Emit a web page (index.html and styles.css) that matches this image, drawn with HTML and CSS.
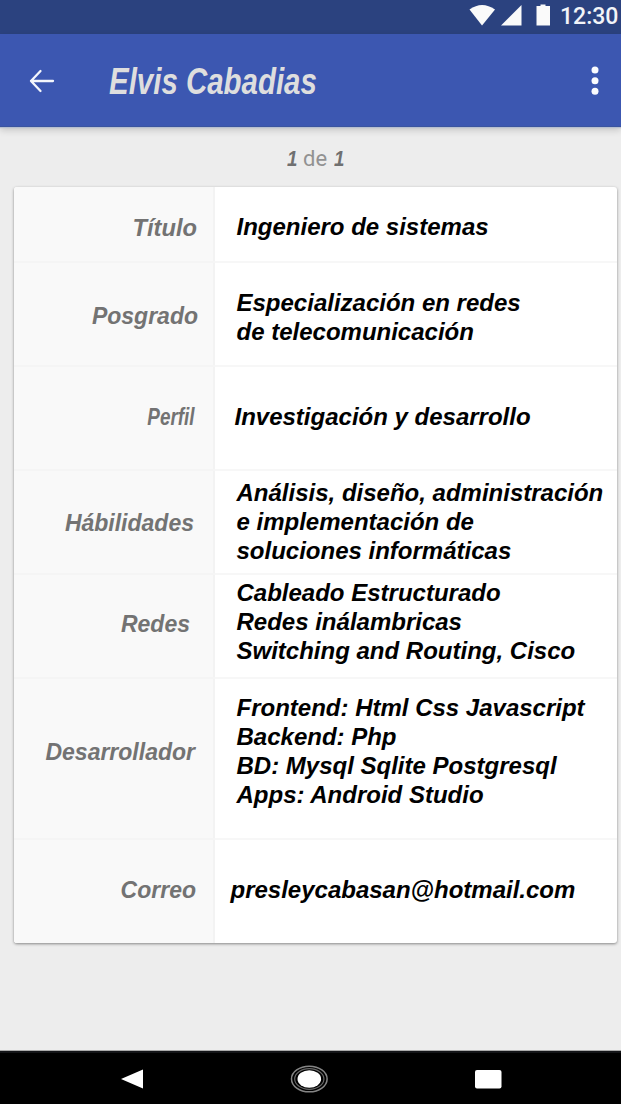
FILE: index.html
```html
<!DOCTYPE html>
<html lang="es">
<head>
<meta charset="utf-8">
<title>Elvis Cabadias</title>
<link rel="stylesheet" href="styles.css">
</head>
<body>
<div class="screen">
  <div class="status">
    <svg class="status-icons" width="84" height="34" viewBox="0 0 84 34" fill="#fafafa">
      <path d="M0.500 9.500Q13 0.500 26 9.500L13 25.500Z"/>
      <path d="M32 25.500H52.500V5Z"/>
      <path d="M67.500 6h4V4.500h5V6h4.500v19.500H67.500Z"/>
    </svg>
    <span class="clock">12:30</span>
  </div>
  <header class="appbar">
    <svg class="back" width="28" height="24" viewBox="0 0 28 24" fill="none" stroke="#f4f6fc" stroke-width="2.300" stroke-linecap="round" stroke-linejoin="round"><path d="M25 12H3M12.500 2L3 12L12.500 22"/></svg>
    <h1 class="title">Elvis Cabadias</h1>
    <svg class="more" width="8" height="30" viewBox="0 0 8 30" fill="#fafbfe"><circle cx="4" cy="4" r="3.500"/><circle cx="4" cy="14.700" r="3.500"/><circle cx="4" cy="25.300" r="3.500"/></svg>
  </header>
  <main class="content">
    <div class="counter"><b class="num">1</b><span class="of">de</span><b class="num">1</b></div>
    <section class="card">
      <div class="row titulo"><div class="label"><span>Título</span></div><div class="value"><span>Ingeniero de sistemas</span></div></div>
      <div class="row posgrado"><div class="label"><span>Posgrado</span></div><div class="value"><span>Especialización en redes</span><span>de telecomunicación</span></div></div>
      <div class="row perfil"><div class="label"><span>Perfil</span></div><div class="value"><span>Investigación y desarrollo</span></div></div>
      <div class="row habilidades"><div class="label"><span>Hábilidades</span></div><div class="value"><span>Análisis, diseño, administración</span><span>e implementación de</span><span>soluciones informáticas</span></div></div>
      <div class="row redes"><div class="label"><span>Redes</span></div><div class="value"><span>Cableado Estructurado</span><span>Redes inálambricas</span><span>Switching and Routing, Cisco</span></div></div>
      <div class="row desarrollador"><div class="label"><span>Desarrollador</span></div><div class="value"><span>Frontend: Html Css Javascript</span><span>Backend: Php</span><span>BD: Mysql Sqlite Postgresql</span><span>Apps: Android Studio</span></div></div>
      <div class="row correo"><div class="label"><span>Correo</span></div><div class="value"><span>presleycabasan@hotmail.com</span></div></div>
    </section>
  </main>
  <nav class="navbar">
    <svg width="621" height="53" viewBox="0 0 621 53" fill="#fff">
      <path d="M121 28L143 18.500V37.500Z"/>
      <ellipse cx="309.300" cy="28" rx="17.800" ry="12.800" fill="none" stroke="#858585" stroke-width="1.500"/>
      <ellipse cx="309.300" cy="28" rx="14.600" ry="10.300" fill="none" stroke="#686868" stroke-width="1.200"/>
      <ellipse cx="309.300" cy="28" rx="11.800" ry="8.700"/>
      <rect x="475" y="19" width="26.500" height="18.500" rx="2"/>
    </svg>
  </nav>
</div>
</body>
</html>
```
FILE: styles.css
```css
* { box-sizing: border-box; }
body { margin: 0; background: #ededed; font-family: "Liberation Sans", Arial, sans-serif; }
.screen { width: 621px; height: 1104px; display: flex; flex-direction: column; overflow: hidden; }
.status { height: 34px; flex: none; background: #2b427f; display: flex; padding-left: 469px; }
.status-icons { flex: none; }
.clock { margin-left: 7px; font: 500 24px/32px Roboto, sans-serif; color: #f2f4f8; white-space: nowrap; transform: scaleX(.96); transform-origin: left; }
.appbar { position: relative; height: 93px; flex: none; background: #3c57b1; border-bottom: 1px solid #3a549f; display: flex; align-items: center; padding: 2px 22px 0 28px; box-shadow: 0 1px 1px #b6bfd0, 0 3px 7px #0000002e; }
.title { margin: 2px 0 0 53px; font-size: 36px; line-height: 40px; font-weight: bold; font-style: italic; color: #dedede; white-space: nowrap; transform: scaleX(.818); transform-origin: left; }
.more { margin-left: auto; flex: none; }
.back { flex: none; }
.content { flex: 1; padding: 17px 4px 0 14px; }
.counter { height: 43px; padding-left: 273px; display: flex; line-height: 29px; color: #707070; font-size: 22px; }
.num { font-style: italic; width: 16px; transform: scaleX(.85); transform-origin: left; }
.of { font: 22px/29px Roboto, sans-serif; color: #929292; width: 31px; }
.card { height: 756px; width: 603px; background: #fff; border-radius: 3px; box-shadow: 0 1px 3px #00000070; overflow: hidden; }
.row { display: grid; grid-template-columns: 201px 1fr; border-bottom: 2px solid #f7f7f7; font-size: 24px; line-height: 29px; font-weight: bold; font-style: italic; }
.row:last-child { border-bottom: 0; }
.label { background: #f9f9f9; border-right: 2px solid #f3f3f3; color: #737373; text-align: right; white-space: nowrap; box-shadow: 0 2px #f5f5f5; font-size: 23px; }
.value { color: #000; padding-left: 21.500px; white-space: nowrap; }
.value span { display: block; }
.titulo { height: 76px; }
.titulo .label { padding: 27px 16px 0 0; font-size: 23.700px; }
.titulo .value { padding-top: 25px; }
.posgrado { height: 104px; }
.posgrado .label { padding: 39px 15px 0 0; }
.posgrado .value { padding-top: 25px; }
.perfil { height: 104px; }
.perfil .label { padding: 36px 18px 0 0; }
.perfil .label span { display: inline-block; transform: scaleX(.82); transform-origin: right; }
.perfil .value { padding: 35px 0 0 19.500px; }
.habilidades { height: 104px; }
.habilidades .label { padding: 38px 19px 0 0; }
.habilidades .value { padding-top: 7px; }
.redes { height: 104px; }
.redes .label { padding: 35px 23px 0 0; }
.redes .value { padding-top: 3px; }
.desarrollador { height: 161px; }
.desarrollador .label { padding: 59px 18px 0 0; }
.desarrollador .value { padding-top: 14px; }
.correo { height: 103px; }
.correo .label { padding: 36px 17px 0 0; }
.correo .value { padding: 35px 0 0 15.500px; }
.navbar { height: 53px; flex: none; background: #000; border-top: 2px solid #141518; box-shadow: 0 -1px #aaa; }
.navbar svg { display: block; margin-top: -2px; }
```
